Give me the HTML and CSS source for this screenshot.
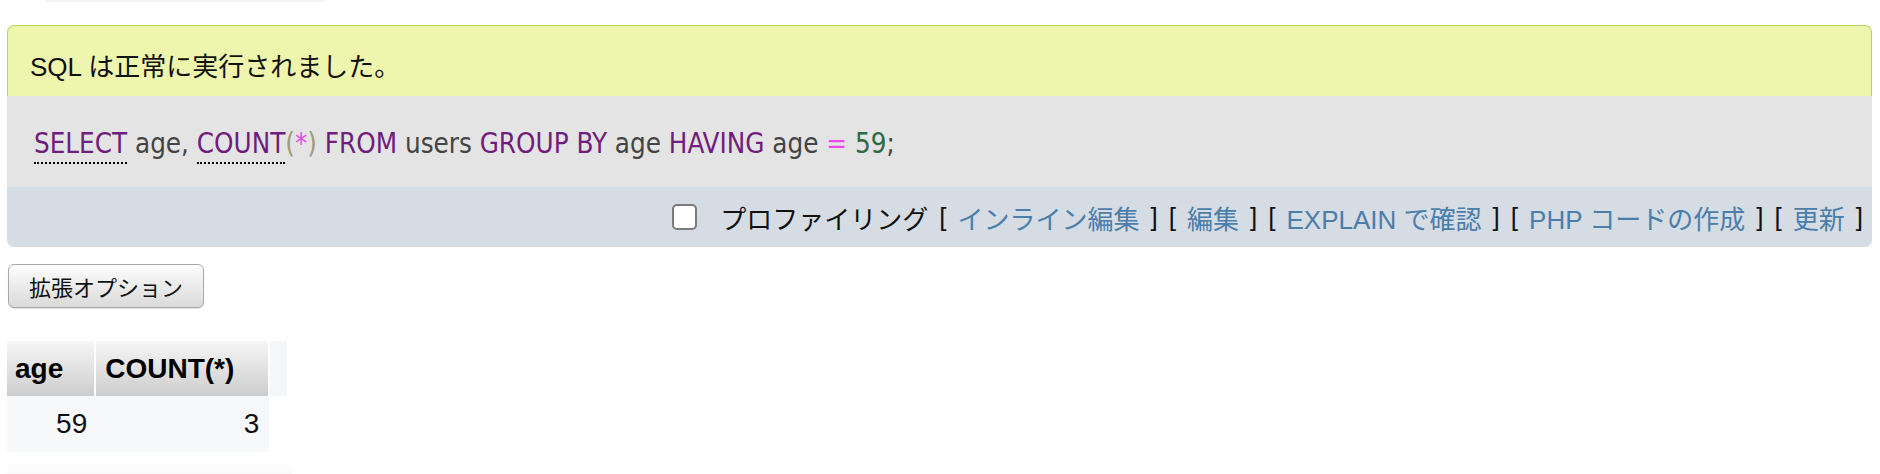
FILE: index.html
```html
<!DOCTYPE html>
<html lang="ja">
<head>
<meta charset="utf-8">
<title>SQL result</title>
<link rel="stylesheet" href="styles.css">
</head>
<body>
<div class="top-edge"></div>
<div class="result">
  <div class="success">SQL は正常に実行されました。</div>
  <div class="sql">
    <code class="sql-code"><span class="kw abbr">SELECT</span> <span class="id">age</span><span class="id">,</span> <span class="kw abbr">COUNT</span><span class="paren">(</span><span class="op">*</span><span class="paren">)</span> <span class="kw">FROM</span> <span class="id">users</span> <span class="kw">GROUP BY</span> <span class="id">age</span> <span class="kw">HAVING</span> <span class="id">age</span> <span class="op">=</span> <span class="num">59</span><span class="id">;</span></code>
  </div>
  <div class="tools">
    <label class="profiling"><input type="checkbox" class="check"><span>プロファイリング</span></label>
    <span class="bracket">[</span><a href="#" class="tool-link">インライン編集</a><span class="bracket">]</span>
    <span class="bracket">[</span><a href="#" class="tool-link">編集</a><span class="bracket">]</span>
    <span class="bracket">[</span><a href="#" class="tool-link">EXPLAIN で確認</a><span class="bracket">]</span>
    <span class="bracket">[</span><a href="#" class="tool-link">PHP コードの作成</a><span class="bracket">]</span>
    <span class="bracket">[</span><a href="#" class="tool-link">更新</a><span class="bracket">]</span>
  </div>
</div>
<div class="options">
  <button class="opt-btn" type="button">拡張オプション</button>
</div>
<table class="data">
  <thead>
    <tr>
      <th class="col-age">age</th>
      <th class="col-count">COUNT(*)</th>
      <th class="col-extra"></th>
    </tr>
  </thead>
  <tbody>
    <tr>
      <td class="num-cell age-cell">59</td>
      <td class="num-cell count-cell">3</td>
    </tr>
  </tbody>
</table>
<div class="bottom-edge"></div>
</body>
</html>
```
FILE: styles.css
```css
html, body {
  margin: 0;
  padding: 0;
  background: #fff;
}
body {
  font-family: "Liberation Sans", "Noto Sans CJK JP", sans-serif;
  color: #000;
  width: 1880px;
  overflow: hidden;
}
.top-edge {
  margin-left: 45px;
  width: 280px;
  height: 2px;
  background: #f1f1f1;
  border-radius: 0 0 8px 8px;
}
.result {
  margin: 23px 8px 0 7px;
}
.success {
  box-sizing: content-box;
  height: 64px;
  border: 1px solid #b4d466;
  border-bottom: none;
  border-radius: 7px 7px 0 0;
  background: #eef6ad;
  padding: 6px 22px 0 22px;
  display: flex;
  align-items: center;
  font-size: 26px;
  color: #111;
}
.sql {
  height: 91px;
  background: #e4e4e4;
  padding-left: 27px;
  display: flex;
  align-items: center;
}
.sql-code {
  font-family: "DejaVu Sans Condensed", "Liberation Sans", sans-serif;
  font-size: 27.5px;
  white-space: pre;
  padding-top: 2px;
}
.kw { color: #6f1d7e; }
.id { color: #444; }
.paren { color: #9d9c7c; }
.op { color: #ec4aec; }
.num { color: #2c6a46; }
.abbr {
  border-bottom: 2px dotted #000;
  padding-bottom: 3px;
}
.tools {
  height: 60px;
  background: #d5dce3;
  border-radius: 0 0 7px 7px;
  display: flex;
  align-items: center;
  justify-content: flex-end;
  padding-right: 9px;
  font-size: 26px;
  gap: 11px;
}
.profiling {
  display: flex;
  align-items: center;
  gap: 23px;
  color: #111;
}
.check {
  appearance: none;
  -webkit-appearance: none;
  margin: 0;
  width: 25px;
  height: 26px;
  border: 2px solid #7b7b7b;
  border-radius: 5px;
  background: #fff;
  box-sizing: border-box;
}
.bracket { color: #111; }
.tool-link {
  color: #4b7eab;
  text-decoration: none;
}
.options {
  margin: 17px 0 0 8px;
}
.opt-btn {
  width: 196px;
  height: 44px;
  border: 1px solid #a8a8a8;
  border-radius: 6px;
  background: linear-gradient(#fdfdfd, #dadada);
  font-family: "Liberation Sans", "Noto Sans CJK JP", sans-serif;
  font-size: 22px;
  color: #111;
  padding: 0;
  box-shadow: 0 1px 1px rgba(0,0,0,0.12);
}
.data {
  margin: 33px 0 0 7px;
  border-collapse: collapse;
  font-size: 28px;
}
.data th {
  height: 55px;
  padding: 0 31px 0 8px;
  background: linear-gradient(#f6f6f6, #cdcdcd);
  text-align: left;
  font-weight: bold;
  color: #000;
  box-sizing: border-box;
}
.data th.col-count {
  border-left: 2px solid #fff;
  padding-left: 9px;
}
.data th.col-age { width: 88px; }
.data th.col-count { width: 174px; }
.data th.col-extra {
  border-left: 2px solid #fff;
  width: 18px;
  padding: 0;
  background: #f5f6f8;
}
.data td {
  height: 56px;
  background: #f7f8fa;
  color: #111;
  box-sizing: border-box;
}
.num-cell { text-align: right; }
.age-cell { padding: 0 8px 0 8px; }
.count-cell { padding: 0 10px 0 9px; }
.bottom-edge {
  margin: 8px 0 0 7px;
  width: 285px;
  height: 20px;
  background: linear-gradient(#ffffff, #f8f8f8);
  border-radius: 10px 10px 0 0;
}
```
